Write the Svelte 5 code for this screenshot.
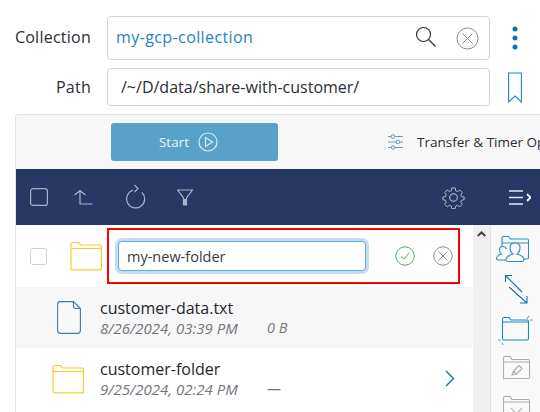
<script>
  const files = [
    { name: "customer-data.txt", date: "8/26/2024, 03:39 PM", size: "0 B", kind: "file" },
    { name: "customer-folder", date: "9/25/2024, 02:24 PM", size: "—", kind: "folder" },
  ];
</script>

{#snippet folderIcon(w, h)}
  <svg width={w} height={h} viewBox="0 0 32 30" fill="none" stroke="#fcc92f" stroke-width="1.2">
    <path d="M1 27V3q0-1.500 1.500-1.500h5.500l3 2.500h19q1.500 0 1.500 1.500V27q0 1.800-1.800 1.800H2.800Q1 28.800 1 27Z" />
    <path d="M1 7.500h31" />
  </svg>
{/snippet}

<div class="page">
  <div class="form">
    <div class="field">
      <span class="label">Collection</span>
      <div class="box box--tall">
        <span class="collection">my-gcp-collection</span>
        <svg class="search" width="22" height="22" viewBox="0 0 22 22" fill="none" stroke="#333" stroke-width="1.200">
          <circle cx="8.500" cy="8.500" r="7" />
          <path d="M13.500 13.500 20.500 20.500" />
        </svg>
        <svg class="clear" width="23" height="23" viewBox="0 0 23 23" fill="none" stroke="#8a8a8a">
          <circle cx="11.500" cy="11.500" r="10.500" />
          <path d="M6.500 6.500l10 10M16.500 6.500l-10 10" />
        </svg>
      </div>
      <div class="aside">
        <svg width="6" height="24" viewBox="0 0 6 24" fill="#0b74ad">
          <circle cx="3" cy="3" r="2.500" />
          <circle cx="3" cy="12" r="2.500" />
          <circle cx="3" cy="21" r="2.500" />
        </svg>
      </div>
    </div>
    <div class="field">
      <span class="label label--path">Path</span>
      <div class="box">
        <span class="path">/~/D/data/share-with-customer/</span>
      </div>
      <div class="aside">
        <svg width="14" height="31" viewBox="0 0 14 31" fill="none" stroke="#1f86c0" stroke-width="1.100">
          <path d="M.6 1h12.800v29l-6.400-6-6.400 6Z" />
        </svg>
      </div>
    </div>
  </div>

  <div class="panel">
    <div class="toolbar">
      <button type="button" class="start">
        Start
        <svg width="20" height="20" viewBox="0 0 20 20" fill="none" stroke="#dcebf4" stroke-width="1.200">
          <circle cx="10" cy="10" r="9" />
          <path d="M7.500 5.500v9l7-4.500Z" />
        </svg>
      </button>
      <svg class="sliders" width="15" height="16" viewBox="0 0 15 16" fill="none" stroke="#6f97bf">
        <path d="M0 2.500h15M0 8h15M0 13.500h15" />
        <circle cx="5" cy="2.500" r="1.800" fill="#f7f7f7" />
        <circle cx="10" cy="8" r="1.800" fill="#f7f7f7" />
        <circle cx="5" cy="13.500" r="1.800" fill="#f7f7f7" />
      </svg>
      <span class="options">Transfer &amp; Timer Options</span>
    </div>

    <div class="navbar">
      <svg class="nav-check" width="18" height="18" viewBox="0 0 18 18" fill="none" stroke="#a9b2c8" stroke-width="1.200">
        <rect x="0.600" y="0.600" width="16.800" height="16.800" rx="2.500" />
      </svg>
      <svg class="nav-up" width="19" height="15" viewBox="0 0 19 15" fill="none" stroke="#a9b2c8" stroke-width="1.200">
        <path d="M.5 5 6 .8l5.500 4.200M6 1v13h12.500" />
      </svg>
      <svg class="nav-refresh" width="22" height="25" viewBox="0 0 22 25" fill="none" stroke="#a9b2c8" stroke-width="1.200">
        <path d="M8 6.300a9 9 0 1 0 9 2.200M9.500 .8 13 4.500 9.500 8" />
      </svg>
      <svg class="nav-filter" width="16" height="17" viewBox="0 0 16 17" fill="none" stroke="#a9b2c8" stroke-width="1.200">
        <path d="M.6 1h14.800L9.500 9v7h-3V9Z" />
        <path d="M7 10h2v6H7Z" fill="#a9b2c8" stroke="none" />
      </svg>
      <svg class="nav-gear" width="23" height="23" viewBox="0 0 24 24" fill="none" stroke="#b6bed2" stroke-width="1.100">
        <circle cx="12" cy="12" r="4" />
        <path d="M10 1h4l.6 3.200 2 .9 2.800-1.800 2.800 2.800-1.800 2.800.9 2 3 .6v3l-3 .8-.9 2 1.800 2.700-2.800 2.800-2.800-1.800-2 .9-.6 3.100h-4l-.6-3.100-2-.9-2.800 1.800-2.800-2.800 1.800-2.700-.9-2-3-.8v-3l3-.6.9-2-1.800-2.800 2.800-2.800 2.800 1.800 2-.9Z" transform="translate(1.200 1.200) scale(.9)" />
      </svg>
      <svg class="nav-menu" width="22" height="15" viewBox="0 0 22 15" fill="none" stroke="#e4e8f0" stroke-width="1.500">
        <path d="M0 1h14M0 7.500h14M0 14h14" />
        <path d="M18 4l3.500 3.500L18 11" stroke="#fff" stroke-width="1.800" />
      </svg>
    </div>

    <div class="content">
      <div class="list">
        <div class="row row--edit">
          <span class="row-check"></span>
          <span class="edit-folder">{@render folderIcon(32, 30)}</span>
          <div class="highlight">
            <input class="name-input" value="my-new-folder" />
            <svg class="ok" width="20" height="20" viewBox="0 0 20 20" fill="none" stroke="#4bab52">
              <circle cx="10" cy="10" r="9.200" />
              <path d="M6 10.500l3 2.500 5-6" />
            </svg>
            <svg class="cancel" width="20" height="20" viewBox="0 0 20 20" fill="none" stroke="#8a8a8a">
              <circle cx="10" cy="10" r="9.200" />
              <path d="M5.500 5.500l9 9M14.500 5.500l-9 9" />
            </svg>
          </div>
        </div>

        {#each files as f}
          <div class="row row--item" class:row--shaded={f.kind === "file"}>
            <span class="item-icon" class:item-icon--file={f.kind === "file"}>
              {#if f.kind === "file"}
                <svg width="24" height="33" viewBox="0 0 24 33" fill="none" stroke="#3f7db5" stroke-width="1.100">
                  <path d="M3 .6h13.500L23.400 7.500V29.500q0 2.900-2.900 2.900H3.500q-2.900 0-2.900-2.900V3.500Q.6.600 3 .6Z" />
                  <path d="M16.500.6v5q0 1.900 1.900 1.900h5" />
                </svg>
              {:else}
                {@render folderIcon(32, 30)}
              {/if}
            </span>
            <div class="item-text">
              <div class="item-name">{f.name}</div>
              <div class="item-date">{f.date}</div>
            </div>
            <span class="item-size">{f.size}</span>
            {#if f.kind === "folder"}
              <svg class="chevron" width="10" height="17" viewBox="0 0 10 17" fill="none" stroke="#0b74ad" stroke-width="1.400">
                <path d="M1 1l7.500 7.500L1 16" />
              </svg>
            {/if}
          </div>
        {/each}
      </div>

      <div class="scrollbar">
        <svg width="9" height="6" viewBox="0 0 9 6" fill="none" stroke="#444" stroke-width="2">
          <path d="M.7 5 4.500 1.400 8.300 5" />
        </svg>
      </div>

      <div class="side">
        <svg class="side-share" width="36" height="32" viewBox="0 0 36 32" fill="none" stroke="#2f8ec6" stroke-width="1.100">
          <path d="M6 12V3q0-1.500 1.500-1.500h5l2 2.500h16.500q1.500 0 1.500 1.500v17q0 1.500-1.500 1.500H28M6 8h26.500" />
          <path d="M10 25q0-4 7-6-3-2-3-6.500Q14 8 19 8t5 4.500q0 4.500-3 6.500 7 2 7 6 0 1.500-2 1.500H12q-2 0-2-1.500Z" fill="#f9f9f9" />
          <path d="M10 25H2q-1.500 0-1.500-1.500 0-3 5-4.500-2-1.500-2-4.500t3-3 4 2.500" />
        </svg>
        <svg width="36" height="30" viewBox="0 0 36 30" fill="none" stroke="#0b74ad" stroke-width="1.100">
          <path d="M7.500 8V1.500H14M7.500 1.500 24 18M11 13l18 16M29 22v7h-7" />
        </svg>
        <svg width="38" height="32" viewBox="0 0 38 32" fill="none" stroke="#0b74ad" stroke-width="1.100">
          <path d="M5.500 26.500V6q0-1.500 1.500-1.500h5l2 2.500h16q1.500 0 1.500 1.500v17q0 1.500-1.500 1.500H7q-1.500 0-1.500-1.500ZM5.500 9h26" stroke="#1f86c0" />
          <path d="M30 6l2-3M33 7h3M1 27h3M5 30l1 2" stroke="#5aa6d0" />
        </svg>
        <svg width="36" height="25" viewBox="0 0 36 25" fill="none" stroke="#a9adb4" stroke-width="1.100">
          <path d="M5.500 22V2q0-1.500 1.500-1.500h5l2 3h16q1.500 0 1.500 1.500v16q0 1.500-1.500 1.500H7Q5.500 23.500 5.500 22ZM5.500 6h26" />
          <path d="M14 19l1.500-4 5.500-5.500 3 3-5.500 5.500ZM15.500 15l3 3" />
        </svg>
        <svg width="36" height="25" viewBox="0 0 36 25" fill="none" stroke="#a9adb4" stroke-width="1.100">
          <path d="M5.500 22V2q0-1.500 1.500-1.500h5l2 3h16q1.500 0 1.500 1.500v16q0 1.500-1.500 1.500H7Q5.500 23.500 5.500 22ZM5.500 6h26" />
          <path d="M13 12l5.500 6 5.500-6" />
        </svg>
      </div>
    </div>
  </div>
</div>

<style>
  :global(body) {
    margin: 0;
    background: #fff;
  }

  .page {
    width: 540px;
    height: 412px;
    overflow: hidden;
    font-family: "Open Sans", Lato, sans-serif;
    color: #2d2d33;
    box-sizing: border-box;
    padding-top: 16px;
  }

  .form {
    display: flex;
    flex-direction: column;
    gap: 8px;
  }

  .field {
    display: grid;
    grid-template-columns: 107px 383px 50px;
    align-items: center;
  }

  .label {
    font-size: 16px;
    letter-spacing: 0.25px;
    text-align: right;
    padding-right: 16px;
    position: relative;
    top: -1px;
  }

  .label--path {
    top: 0;
  }

  .box {
    height: 38px;
    box-sizing: border-box;
    border: 1px solid #cfd4de;
    border-radius: 4px;
    display: flex;
    align-items: center;
    padding: 0 10px 0 13px;
    font-size: 16px;
  }

  .box--tall {
    height: 44px;
    padding-left: 8px;
  }

  .collection {
    flex: 1;
    color: #1f83bd;
    letter-spacing: 0.4px;
    padding-bottom: 2px;
  }

  .search {
    margin-right: 19px;
    margin-top: -3px;
  }

  .aside {
    display: flex;
    justify-content: center;
  }

  .panel {
    margin: 8px 0 0 15px;
    border-left: 1px solid #e2e4e8;
    border-top: 1px solid #e2e4e8;
    border-radius: 4px 0 0 0;
    height: 300px;
    overflow: hidden;
  }

  .toolbar {
    height: 54px;
    background: #f7f7f7;
    display: flex;
    align-items: center;
    padding-left: 95px;
    white-space: nowrap;
  }

  .start {
    width: 167px;
    height: 38px;
    flex: none;
    border: 0;
    border-radius: 3px;
    background: #58a2ca;
    color: #eaf3f8;
    font: 13.5px "Open Sans", sans-serif;
    display: flex;
    align-items: center;
    justify-content: center;
    gap: 9px;
    padding: 0 12px 0 0;
  }

  .sliders {
    flex: none;
    margin-left: 110px;
    margin-right: 14px;
  }

  .options {
    font-size: 13.5px;
  }

  .navbar {
    height: 56px;
    background: #283864;
    display: flex;
    align-items: center;
    padding-left: 14px;
  }

  .nav-up {
    margin-left: 26px;
  }

  .nav-refresh {
    margin-left: 32px;
    margin-top: -2px;
  }

  .nav-filter {
    margin-left: 30px;
  }

  .nav-gear {
    margin-left: 249px;
  }

  .nav-menu {
    margin-left: 44px;
  }

  .content {
    display: flex;
    height: 190px;
  }

  .list {
    width: 457px;
    flex: none;
  }

  .row {
    display: flex;
    align-items: center;
  }

  .row--edit {
    height: 62px;
  }

  .row-check {
    width: 17px;
    height: 17px;
    box-sizing: border-box;
    margin-left: 14px;
    border: 1px solid #cdd0d6;
    border-radius: 3px;
  }

  .edit-folder {
    display: flex;
    margin-left: 23px;
  }

  .highlight {
    width: 353px;
    height: 56px;
    margin-left: 5px;
    box-sizing: border-box;
    border: 2px solid #ff0000;
    display: flex;
    align-items: center;
    padding-left: 9px;
  }

  .name-input {
    width: 248px;
    height: 30px;
    box-sizing: border-box;
    border: 1px solid #4db2f0;
    border-radius: 4px;
    box-shadow: 0 0 0 3px #c4deec;
    font: 14.5px "Open Sans", sans-serif;
    color: #3a3a44;
    padding: 0 8px;
    outline: none;
  }

  .ok {
    margin-left: 29px;
  }

  .cancel {
    margin-left: 18px;
  }

  .row--item {
    height: 61px;
  }

  .row--shaded {
    background: #f7f7f7;
  }

  .item-icon {
    display: flex;
    margin-left: 36px;
    width: 48px;
  }

  .item-icon--file {
    margin-left: 41px;
    width: 43px;
  }

  .item-text {
    width: 167px;
  }

  .item-name {
    font-size: 16px;
    line-height: 20px;
    color: #26262c;
  }

  .item-date {
    font-size: 15px;
    line-height: 20px;
    font-style: italic;
    color: #75757b;
    white-space: nowrap;
  }

  .item-size {
    font-size: 14.500px;
    font-style: italic;
    color: #75757b;
    width: 178px;
    padding-top: 20px;
    flex: none;
  }

  .chevron {
    flex: none;
  }

  .scrollbar {
    width: 18px;
    flex: none;
    background: #f0f0f0;
    border-right: 1px solid #e0e2e6;
    display: flex;
    justify-content: center;
    align-items: flex-start;
    padding-top: 6px;
    box-sizing: border-box;
  }

  .side {
    flex: none;
    width: 50px;
    background: #f9f9f9;
    display: flex;
    flex-direction: column;
    align-items: center;
    gap: 7px;
    padding-top: 10px;
  }

  .side svg {
    flex: none;
  }

  .side-share {
    margin-left: -4px;
  }

  .side svg:nth-child(3) {
    margin-top: 2px;
  }

  .side svg:nth-child(4) {
    margin-top: 4px;
  }

  .side svg:nth-child(5) {
    margin-top: 8px;
  }
</style>
